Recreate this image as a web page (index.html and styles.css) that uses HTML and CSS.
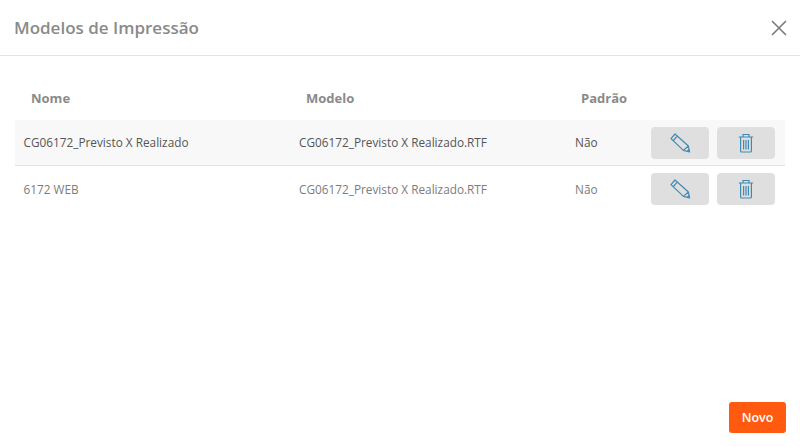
FILE: index.html
```
<!DOCTYPE html>
<html lang="pt">
<head>
<meta charset="utf-8">
<title>Modelos de Impressão</title>
<link rel="stylesheet" href="styles.css">
</head>
<body>
<div class="modal">
  <header class="modal-header">
    <h1 class="modal-title">Modelos de Impressão</h1>
    <button class="close" aria-label="Fechar">
      <svg width="16" height="16" viewBox="0 0 16 16"><path d="M1 1L15 15M15 1L1 15" fill="none" stroke="#7a7a7a" stroke-width="1.6"/></svg>
    </button>
  </header>
  <main class="modal-body">
    <div class="row head">
      <div class="cell name">Nome</div>
      <div class="cell model">Modelo</div>
      <div class="cell std">Padrão</div>
    </div>
    <div class="row item odd">
      <div class="cell name">CG06172_Previsto X Realizado</div>
      <div class="cell model">CG06172_Previsto X Realizado.RTF</div>
      <div class="cell std">Não</div>
      <div class="actions">
        <button class="act" aria-label="Editar">
          <svg width="22" height="22" viewBox="0 0 22 22"><path d="M2 6.6L6 2L19.4 14L20.6 20L14.4 18.4ZM4 9L8.2 4.2M14.4 18.4L19.4 14" fill="none" stroke="#3f8bb3" stroke-width="1.2" stroke-linejoin="round"/><path d="M17.4 19.2L19.8 16.8L20.6 20Z" fill="#3f8bb3"/></svg>
        </button>
        <button class="act" aria-label="Excluir">
          <svg width="16" height="20" viewBox="0 0 16 20"><path d="M0.8 4H15.2M5 4V1.5H11V4M2.6 4V18A1 1 0 0 0 3.6 19H12.4A1 1 0 0 0 13.4 18V4" fill="none" stroke="#3f8bb3" stroke-width="1.2"/><path d="M5.6 7V16.5M8 7V16.5M10.4 7V16.5" fill="none" stroke="#3f8bb3" stroke-width="1.2"/></svg>
        </button>
      </div>
    </div>
    <div class="row item">
      <div class="cell name">6172 WEB</div>
      <div class="cell model">CG06172_Previsto X Realizado.RTF</div>
      <div class="cell std">Não</div>
      <div class="actions">
        <button class="act" aria-label="Editar">
          <svg width="22" height="22" viewBox="0 0 22 22"><path d="M2 6.6L6 2L19.4 14L20.6 20L14.4 18.4ZM4 9L8.2 4.2M14.4 18.4L19.4 14" fill="none" stroke="#3f8bb3" stroke-width="1.2" stroke-linejoin="round"/><path d="M17.4 19.2L19.8 16.8L20.6 20Z" fill="#3f8bb3"/></svg>
        </button>
        <button class="act" aria-label="Excluir">
          <svg width="16" height="20" viewBox="0 0 16 20"><path d="M0.8 4H15.2M5 4V1.5H11V4M2.6 4V18A1 1 0 0 0 3.6 19H12.4A1 1 0 0 0 13.4 18V4" fill="none" stroke="#3f8bb3" stroke-width="1.2"/><path d="M5.6 7V16.5M8 7V16.5M10.4 7V16.5" fill="none" stroke="#3f8bb3" stroke-width="1.2"/></svg>
        </button>
      </div>
    </div>
  </main>
  <footer class="modal-footer">
    <button class="primary">Novo</button>
  </footer>
</div>
</body>
</html>
```

FILE: styles.css
```
* { box-sizing: border-box; }
html, body { margin: 0; height: 100%; background: #fff; overflow: hidden; }
body { font-family: "Open Sans", sans-serif; color: #6d6d6d; }
button { font-family: inherit; border: 0; cursor: pointer; }

.modal { height: 447px; display: flex; flex-direction: column; }

.modal-header {
  height: 56px;
  flex: none;
  display: flex;
  align-items: center;
  justify-content: space-between;
  padding: 0 13px 0 14px;
  border-bottom: 1px solid #e3e3e3;
}
.modal-title { margin: 0; font-size: 17px; font-weight: 600; color: #8a8a8a; }
.close { background: none; padding: 0; width: 16px; height: 16px; display: block; }
.close svg { display: block; }

.modal-body { flex: 1; padding: 0 15px; }

.row { display: flex; align-items: center; }
.head {
  height: 64px;
  font-size: 13px;
  font-weight: 700;
  color: #8a8a8a;
  padding-top: 20px;
}
.head .name { padding-left: 16px; }
.head .model { padding-left: 16px; }
.head .std { padding-left: 15px; }

.item { height: 46px; font-size: 11.8px; color: #7c7c7c; border-bottom: 1px solid #e2e2e2; }
.item:last-child { border-bottom: 0; }
.item.odd { background: #f8f8f8; color: #555; }
.item .cell { padding-bottom: 1px; line-height: 16px; }
.item .name { padding-left: 8.5px; }
.item .model { padding-left: 9px; }
.item .std { padding-left: 9px; }

.cell.name { width: 275px; }
.cell.model { width: 276px; }
.cell.std { width: 85px; }

.actions { display: flex; gap: 8px; }
.act {
  width: 58px;
  height: 32px;
  background: #dfdfdf;
  border-radius: 4px;
  display: flex;
  align-items: center;
  justify-content: center;
  padding: 0;
}

.modal-footer { flex: none; display: flex; justify-content: flex-end; padding: 0 14px 14px 0; }
.primary {
  width: 57px;
  height: 31px;
  background: #ff5a0f;
  color: #fff;
  font-size: 12.5px;
  font-weight: 600;
  border-radius: 3px;
  padding: 0;
}
```
